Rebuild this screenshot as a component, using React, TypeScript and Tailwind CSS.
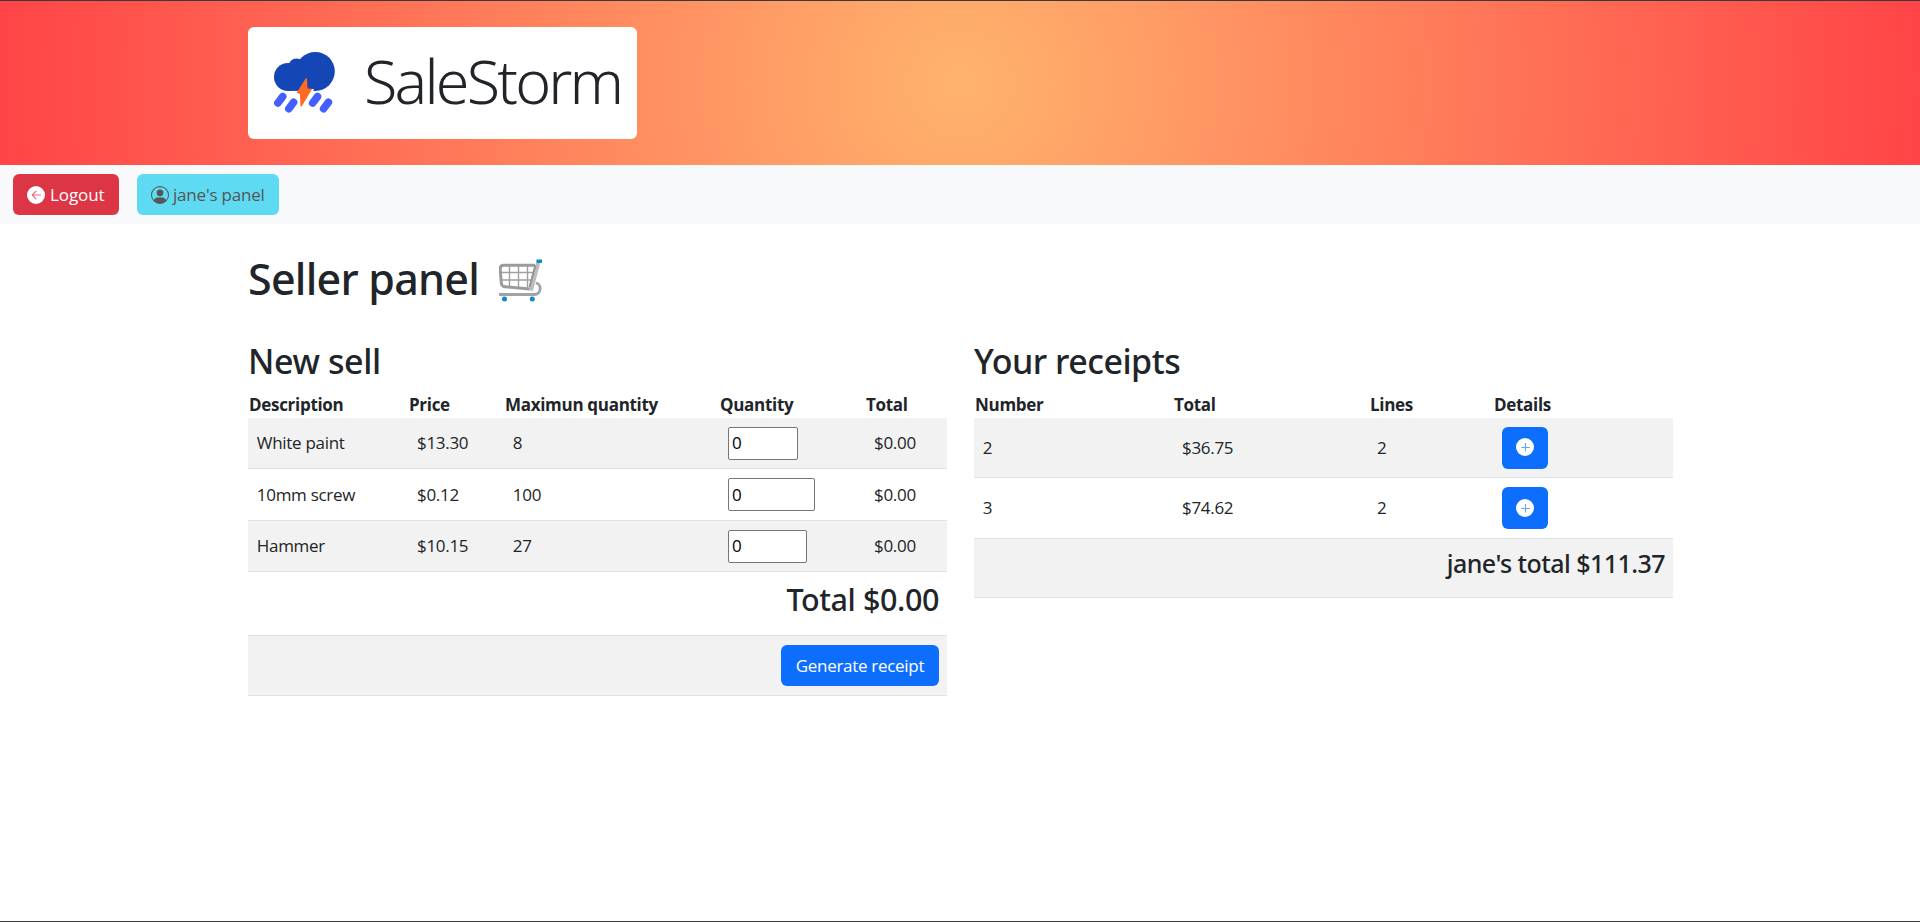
import type { ReactNode } from "react";
import { BsPersonCircle } from "react-icons/bs";

const products = [
  { name: "White paint", price: "$13.30", max: 8, input: "w-[70px]", row: "h-[51px]" },
  { name: "10mm screw", price: "$0.12", max: 100, input: "w-[87px]", row: "h-[52px]" },
  { name: "Hammer", price: "$10.15", max: 27, input: "w-[79px]", row: "h-[51px]" },
];

const receipts = [
  { number: 2, total: "$36.75", lines: 2, row: "h-[60px]" },
  { number: 3, total: "$74.62", lines: 2, row: "h-[61px]" },
];

function StormLogo() {
  return (
    <svg className="mb-[2px] h-[62px] w-[62px]" viewBox="274 51 62 62">
      <g fill="#1446b6">
        <circle cx="315.3" cy="71.4" r="19.5" />
        <circle cx="288" cy="77" r="14" />
        <circle cx="296.5" cy="66.5" r="8" />
        <rect x="288" y="66" width="28" height="24.9" />
      </g>
      <path d="M297.8 91.2 295 94.5h4v-3.3zM309 91.2h4l1-2.2h-4z" fill="#fff" />
      <path d="M305.8 78.2 296.6 92.8l3.4 1.2.4 12.2h1.4L312.2 88.8l-4.7-.4-.5-10.2z" fill="#ff6a22" />
      <g stroke="#445fff" strokeWidth="7.6" strokeLinecap="round">
        <path d="M282.7 96.6 277.9 103" />
        <path d="M293.6 102.2 288.8 108.8" />
        <path d="M317.5 96.6 312.7 103" />
        <path d="M328.4 102.2 323.6 108.8" />
      </g>
    </svg>
  );
}

function ArrowCircle() {
  return (
    <svg className="size-[18px] shrink-0" viewBox="0 0 18 18" fill="none">
      <circle cx="9" cy="9" r="9" fill="#fff" />
      <path d="M13.500 9H5.500M9 5.200 5.200 9 9 12.800" stroke="#e4707c" strokeWidth="1.1" strokeLinecap="round" strokeLinejoin="round" />
    </svg>
  );
}

function PlusCircle() {
  return (
    <svg className="mb-px size-[18px]" viewBox="0 0 18 18" fill="none">
      <circle cx="9" cy="9" r="9" fill="#fff" />
      <path d="M9.500 5v8.500M5.200 9.500h8.500" stroke="#6ba6fe" strokeWidth="1.1" />
    </svg>
  );
}

function Cart() {
  return (
    <svg className="mt-[2px] ml-px h-[44px] w-[44px]" viewBox="0 0 44 44" fill="none">
      <path d="M2 13.500h32M3 21h29M10.500 7v21M19.500 7v22M28.500 7v22" stroke="#a0a0a0" strokeWidth="1.4" />
      <path d="M36 6.200H4.500Q1.200 6.200 1.200 9.500L2.200 23.500Q2.500 27.500 6 27.800L31 30" stroke="#9b9b9b" strokeWidth="3" />
      <path d="M39.500 3 32 31.500" stroke="#bdbdbd" strokeWidth="4" />
      <path d="M36.500 6 30.500 28" stroke="#949494" strokeWidth="2" />
      <path d="M37 24c6.500 1.500 5 11.500-1.500 11.500H0" stroke="#a3a3a3" strokeWidth="2.800" />
      <path d="M37.500 2.200h5.500" stroke="#0c87d1" strokeWidth="3.400" />
      <circle cx="5.500" cy="39.900" r="2.500" fill="#0c87d1" />
      <circle cx="33.300" cy="39.900" r="2.500" fill="#0c87d1" />
    </svg>
  );
}

function HeadRow({ cols, labels }: { cols: string; labels: string[] }) {
  return (
    <div className={`grid h-[28px] items-center pt-px text-[17px] font-bold tracking-[-0.3px] ${cols}`}>
      {labels.map((label) => (
        <div key={label} className="pl-px">{label}</div>
      ))}
    </div>
  );
}

function Row({ cols = "", className, striped, children }: { cols?: string; className: string; striped: boolean; children: ReactNode }) {
  return (
    <div className={`grid items-center border-b border-[#dee2e6] ${striped ? "bg-[#f2f2f2]" : "bg-white"} ${cols} ${className}`}>
      {children}
    </div>
  );
}

const sellCols = "grid-cols-[160px_96px_215px_146px_82px]";
const receiptCols = "grid-cols-[199px_196px_124px_180px]";

export default function App() {
  return (
    <div className="flex h-[922px] w-[1920px] flex-col overflow-hidden border-y border-[#3a3a3c] bg-white font-['Open_Sans','Noto_Sans',sans-serif] text-[17px] leading-[26px] tracking-[-0.3px] text-[#212529]">
      <header className="h-[164px] shrink-0 bg-[radial-gradient(circle,#ffb36d_0%,#ff4447_100%)] pt-[26px] pl-[248px]">
        <div className="flex h-[112px] w-[389px] items-center rounded-[6px] bg-white pl-[26px]">
          <StormLogo />
          <span className="mb-[5px] ml-[28px] font-['Noto_Sans','Open_Sans',sans-serif] text-[61px] leading-[70px] font-light tracking-[-2.8px] whitespace-nowrap">SaleStorm</span>
        </div>
      </header>
      <nav className="flex h-[59px] shrink-0 items-center gap-[18px] bg-[#f8f9fa] pl-[13px]">
        <button className="flex h-[41px] w-[106px] items-center gap-[5px] rounded-[6px] bg-[#dc3545] pl-[14px] tracking-[-0.1px] text-white">
          <ArrowCircle />
          Logout
        </button>
        <button className="flex h-[41px] w-[142px] items-center gap-[4px] rounded-[6px] bg-[#5fdaf3] pl-[14px] tracking-[-0.2px] text-[#565656]">
          <BsPersonCircle className="size-[18px]" />
          jane's panel
        </button>
      </nav>
      <main className="pl-[248px] [&_:is(h1,h2,h3,h4)]:font-['Noto_Sans','Open_Sans',sans-serif]">
        <div className="mt-[29px] flex h-[53px] items-center">
          <h1 className="mb-[3px] w-[250px] text-[43px] leading-[53px] font-medium tracking-[-0.75px] whitespace-nowrap">Seller panel</h1>
          <Cart />
        </div>
        <div className="mt-[35px] flex gap-[27px]">
          <section className="w-[699px]">
            <h2 className="mb-[8px] h-[41px] text-[34px] leading-[40px] font-medium tracking-[-0.4px]">New sell</h2>
            <HeadRow cols={sellCols} labels={["Description", "Price", "Maximun quantity", "Quantity", "Total"]} />
            {products.map((p, i) => (
              <Row key={p.name} cols={sellCols} className={p.row} striped={i % 2 === 0}>
                <div className="pl-[8.8px]">{p.name}</div>
                <div className="pl-[9px]">{p.price}</div>
                <div className="pl-[8.8px]">{p.max}</div>
                <div className="pl-[9px]">
                  <input defaultValue="0" className={`block h-[33px] rounded-[2px] border border-[#767676] bg-white pb-px pl-[3px] text-black ${p.input}`} />
                </div>
                <div className="pl-[9px]">$0.00</div>
              </Row>
            ))}
            <Row className="h-[64px] pr-[8px] pb-[8px]" striped={false}>
              <h3 className="text-right text-[30.5px] leading-[37px] font-medium tracking-[-0.4px]">Total $0.00</h3>
            </Row>
            <Row className="h-[60px] justify-end pr-[8px]" striped>
              <button className="h-[41px] w-[158px] rounded-[6px] bg-[#0d6efd] text-white">Generate receipt</button>
            </Row>
          </section>
          <section className="w-[699px]">
            <h2 className="mb-[8px] h-[41px] text-[34px] leading-[40px] font-medium tracking-[-0.5px]">Your receipts</h2>
            <HeadRow cols={receiptCols} labels={["Number", "Total", "Lines", "Details"]} />
            {receipts.map((r, i) => (
              <Row key={r.number} cols={receiptCols} className={r.row} striped={i % 2 === 0}>
                <div className="pl-[8.8px]">{r.number}</div>
                <div className="pl-[9px]">{r.total}</div>
                <div className="pl-[8px]">{r.lines}</div>
                <div className="pl-[9px]">
                  <button className="flex h-[42px] w-[46px] items-center justify-center rounded-[6px] bg-[#0d6efd] text-white">
                    <PlusCircle />
                  </button>
                </div>
              </Row>
            ))}
            <Row className="h-[59px] pr-[8px] pb-[11px]" striped>
              <h4 className="text-right text-[25px] leading-[32px] font-medium tracking-[-0.55px]">jane's total $111.37</h4>
            </Row>
          </section>
        </div>
      </main>
    </div>
  );
}
